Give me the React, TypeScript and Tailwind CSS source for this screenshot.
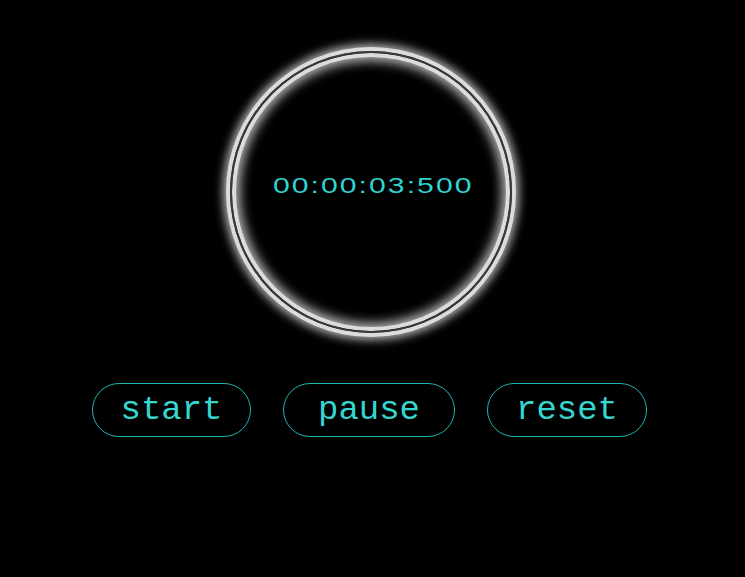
import React from "react";

export default function App() {
  return (
    <div className="w-[745px] h-[577px] bg-black flex flex-col items-center">
      {/* timer ring */}
      <div className="mt-[51px] ml-[-3px] w-[282px] h-[282px] rounded-full border-2 border-[#3a3a3a] shadow-[0_0_0_4px_#dcdcdc,0_0_10px_7px_rgba(255,255,255,0.7),inset_0_0_0_4px_#dcdcdc,inset_0_0_11px_8px_rgba(255,255,255,0.7)] flex items-center justify-center">
        <span className="mt-[-12px] ml-[4px] text-[22px] text-[#2fd3cf] tracking-[1.5px] scale-x-[1.37] font-['Liberation_Sans',sans-serif] leading-none">
          00:00:03:500
        </span>
      </div>

      {/* controls */}
      <div className="mt-[50px] ml-[-6px] flex gap-[32px] font-['Liberation_Mono',monospace] text-[34px] text-[#34d6d0]">
        <button className="w-[159px] h-[54px] rounded-full border border-[#1fb5b2] leading-none">
          start
        </button>
        <button className="w-[172px] h-[54px] rounded-full border border-[#1fb5b2] leading-none">
          pause
        </button>
        <button className="w-[160px] h-[54px] rounded-full border border-[#1fb5b2] leading-none">
          reset
        </button>
      </div>
    </div>
  );
}
